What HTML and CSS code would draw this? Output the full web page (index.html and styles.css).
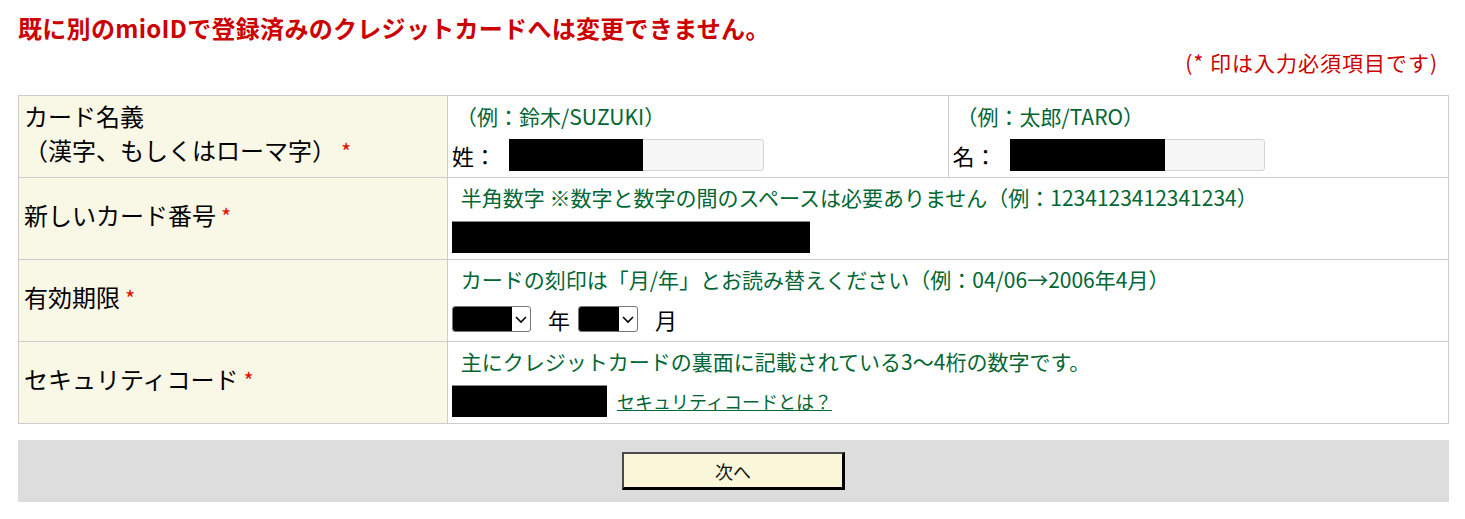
FILE: index.html
```html
<!DOCTYPE html>
<html lang="ja">
  <head>
    <meta charset="UTF-8" />
    <meta name="viewport" content="width=device-width, initial-scale=1.0" />
    <title>カード変更</title>
    <link rel="stylesheet" href="styles.css">
  </head>
  <body>
    <div class="page">
      <h1 class="error">既に別のmioIDで登録済みのクレジットカードへは変更できません。</h1>
      <p class="note">(* 印は入力必須項目です)</p>

      <table class="form-table">
        <colgroup>
          <col class="col-label">
          <col class="col-half">
          <col class="col-half">
        </colgroup>
        <tr>
          <th>カード名義<br>（漢字、もしくはローマ字）<span class="req">*</span></th>
          <td>
            <div class="hint">（例：鈴木/SUZUKI）</div>
            <div class="name-line">
              <span class="name-label">姓：</span>
              <span class="text-input"><span class="redact redact-sei"></span></span>
            </div>
          </td>
          <td>
            <div class="hint">（例：太郎/TARO）</div>
            <div class="name-line">
              <span class="name-label">名：</span>
              <span class="text-input"><span class="redact redact-mei"></span></span>
            </div>
          </td>
        </tr>
        <tr>
          <th>新しいカード番号<span class="req">*</span></th>
          <td colspan="2">
            <div class="hint">&nbsp;半角数字 ※数字と数字の間のスペースは必要ありません（例：1234123412341234）</div>
            <div class="redact-box box-number"></div>
          </td>
        </tr>
        <tr>
          <th>有効期限<span class="req">*</span></th>
          <td colspan="2">
            <div class="hint">&nbsp;カードの刻印は「月/年」とお読み替えください（例：04/06→2006年4月）</div>
            <div class="expire-line">
              <span class="select sel-year">
                <span class="sel-value"></span>
                <svg class="chev" width="18" height="24" viewBox="0 0 18 24"><polyline points="4,10 9,15 14,10" fill="none" stroke="#000" stroke-width="1.6"/></svg>
              </span>
              <span class="unit">年</span>
              <span class="select sel-month">
                <span class="sel-value"></span>
                <svg class="chev" width="18" height="24" viewBox="0 0 18 24"><polyline points="4,10 9,15 14,10" fill="none" stroke="#000" stroke-width="1.6"/></svg>
              </span>
              <span class="unit">月</span>
            </div>
          </td>
        </tr>
        <tr>
          <th>セキュリティコード<span class="req">*</span></th>
          <td colspan="2">
            <div class="hint">&nbsp;主にクレジットカードの裏面に記載されている3～4桁の数字です。</div>
            <div class="cvc-line">
              <div class="redact-box box-cvc"></div>
              <a href="#" class="help-link">セキュリティコードとは？</a>
            </div>
          </td>
        </tr>
      </table>

      <div class="actions">
        <button class="next-btn">次へ</button>
      </div>
    </div>
  </body>
</html>
```

FILE: styles.css
```css
* {
  margin: 0;
  padding: 0;
  box-sizing: border-box;
}

body {
  font-family: "Noto Sans CJK JP", "Noto Sans", sans-serif;
  background-color: #fff;
  color: #000;
}

.page {
  padding: 14px 16px 0 18px;
}

.error {
  color: #cc0000;
  font-size: 24px;
  font-weight: bold;
  line-height: 28px;
  letter-spacing: 0.3px;
}

.note {
  color: #cc0000;
  font-size: 21px;
  letter-spacing: 1px;
  line-height: 28px;
  text-align: right;
  padding-right: 11px;
  margin-top: 6px;
  margin-bottom: 19px;
}

.form-table {
  width: 100%;
  border-collapse: collapse;
  table-layout: fixed;
}

.col-label {
  width: 429px;
}

.form-table th,
.form-table td {
  border: 1px solid #cccccc;
  height: 82px;
  vertical-align: middle;
}

.form-table th {
  background-color: #f9f7e5;
  font-weight: normal;
  text-align: left;
  font-size: 24px;
  line-height: 34px;
  padding: 0 5px 8px;
}

.form-table td {
  padding: 4px 4px 6px;
}

.req {
  color: #dd1100;
  font-size: 22px;
  margin-left: 5px;
}

.hint {
  color: #006633;
  font-size: 21px;
  line-height: 30px;
  padding-left: 4px;
  white-space: nowrap;
}

.name-line {
  display: flex;
  align-items: center;
  margin-top: 8px;
  height: 32px;
}

.name-label {
  font-size: 22px;
  line-height: 32px;
  width: 57px;
}

.text-input {
  display: flex;
  width: 255px;
  height: 32px;
  background-color: #f7f7f7;
  border: 1px solid #d4d4d4;
  border-radius: 3px;
}

.redact {
  display: block;
  background-color: #000;
  height: 32px;
  margin: -1px 0 0 -1px;
}

.redact-sei {
  width: 134px;
}

.redact-mei {
  width: 155px;
}

.redact-box {
  background-color: #000;
  height: 32px;
  border-top: 1px solid #888;
}

.box-number {
  width: 358px;
  margin-top: 9px;
}

.expire-line {
  display: flex;
  align-items: center;
  margin-top: 9px;
  height: 32px;
}

.select {
  display: flex;
  align-items: center;
  height: 26px;
  border: 1px solid #767676;
  border-radius: 3px;
  background-color: #fff;
  overflow: hidden;
}

.sel-year {
  width: 79px;
}

.sel-month {
  width: 60px;
}

.sel-value {
  flex: 1;
  align-self: stretch;
  background-color: #000;
}

.chev {
  flex: none;
}

.unit {
  font-size: 22px;
  line-height: 32px;
  margin: 0 8px 0 17px;
}

.cvc-line {
  display: flex;
  align-items: center;
  margin-top: 9px;
}

.box-cvc {
  width: 155px;
}

.help-link {
  color: #006633;
  font-size: 18px;
  line-height: 28px;
  margin-left: 10px;
  text-decoration: underline;
}

.actions {
  margin-top: 16px;
  background-color: #dddddd;
  height: 62px;
  display: flex;
  justify-content: center;
  align-items: center;
}

.next-btn {
  width: 223px;
  height: 38px;
  background-color: #faf6d9;
  border-style: solid;
  border-width: 2px 3px 3px 2px;
  border-color: #4a4a4a #000 #000 #4a4a4a;
  font-family: "Noto Sans CJK JP", sans-serif;
  font-size: 18px;
  color: #111;
  cursor: pointer;
}
```
